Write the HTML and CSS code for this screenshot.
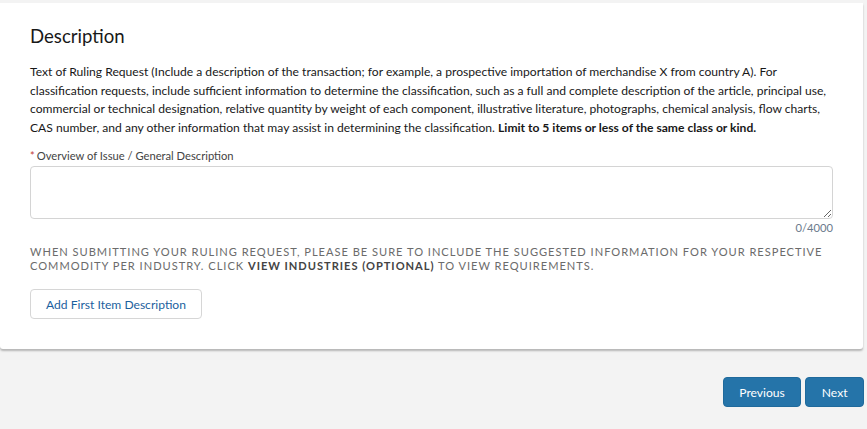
FILE: index.html
```html
<!DOCTYPE html>
<html>
<head>
<meta charset="utf-8">
<link rel="stylesheet" href="styles.css">
</head>
<body>
<div class="page">
  <section class="card">
    <h2 class="title">Description</h2>
    <p class="intro">Text of Ruling Request (Include a description of the transaction; for example, a prospective importation of merchandise X from country A). For classification requests, include sufficient information to determine the classification, such as a full and complete description of the article, principal use, commercial or technical designation, relative quantity by weight of each component, illustrative literature, photographs, chemical analysis, flow charts, CAS number, and any other information that may assist in determining the classification. <b>Limit to 5 items or less of the same class or kind.</b></p>
    <label class="label"><span class="req">*</span>Overview of Issue / General Description</label>
    <textarea class="area"></textarea>
    <div class="counter">0/4000</div>
    <p class="notice">When submitting your ruling request, please be sure to include the suggested information for your respective commodity per industry. Click <b>View Industries (optional)</b> to view requirements.</p>
    <button class="btn-outline">Add First Item Description</button>
  </section>
  <div class="nav">
    <button class="btn-primary">Previous</button>
    <button class="btn-primary">Next</button>
  </div>
</div>
</body>
</html>
```
FILE: styles.css
```css
html, body {
  margin: 0;
  padding: 0;
  background: #f3f3f3;
  font-family: Lato, "Open Sans", sans-serif;
}
.page {
  padding-top: 3px;
}
.card {
  background: #fff;
  margin-right: 4px;
  padding: 21px 30px 30px 30px;
  box-shadow: 0 2px 2px rgba(0,0,0,0.25);
  border-radius: 0 0 3px 3px;
  display: flex;
  flex-direction: column;
  align-items: flex-start;
}
.title {
  margin: 0;
  font-size: 18.6px;
  font-weight: 400;
  color: #181818;
  line-height: 24px;
}
.intro {
  margin: 15px 0 0 0;
  font-size: 12.1px;
  line-height: 18.5px;
  color: #181818;
}
.intro b { font-weight: 700; }
.label {
  margin-top: 11px;
  font-size: 11.2px;
  line-height: 16px;
  color: #444;
}
.req {
  color: #c23934;
  margin-right: 2px;
}
.area {
  margin-top: 2px;
  box-sizing: border-box;
  width: 100%;
  height: 53px;
  border: 1px solid #d4d4d4;
  border-radius: 4px;
  resize: vertical;
  font-family: inherit;
}
.counter {
  align-self: flex-end;
  font-size: 11.2px;
  line-height: 16px;
  color: #6b7a8c;
  margin-top: 1px;
}
.notice {
  margin: 9px 0 0 0;
  font-size: 11.1px;
  line-height: 14px;
  letter-spacing: 0.98px;
  text-transform: uppercase;
  color: #6b6b6b;
}
.notice b { color: #444; font-weight: 700; }
.btn-outline {
  margin-top: 16px;
  height: 30px;
  padding: 0 15px;
  background: #fff;
  border: 1px solid #d6d6d6;
  border-radius: 4px;
  color: #1b5f9e;
  font-family: inherit;
  font-size: 12.1px;
}
.nav {
  display: flex;
  justify-content: flex-end;
  gap: 4px;
  padding: 28px 3px 0 0;
}
.btn-primary {
  height: 30px;
  padding: 0 15.5px;
  background: #2574a9;
  border: 1px solid #1f6a9c;
  border-radius: 4px;
  color: #fff;
  font-family: inherit;
  font-size: 12.1px;
}
```
